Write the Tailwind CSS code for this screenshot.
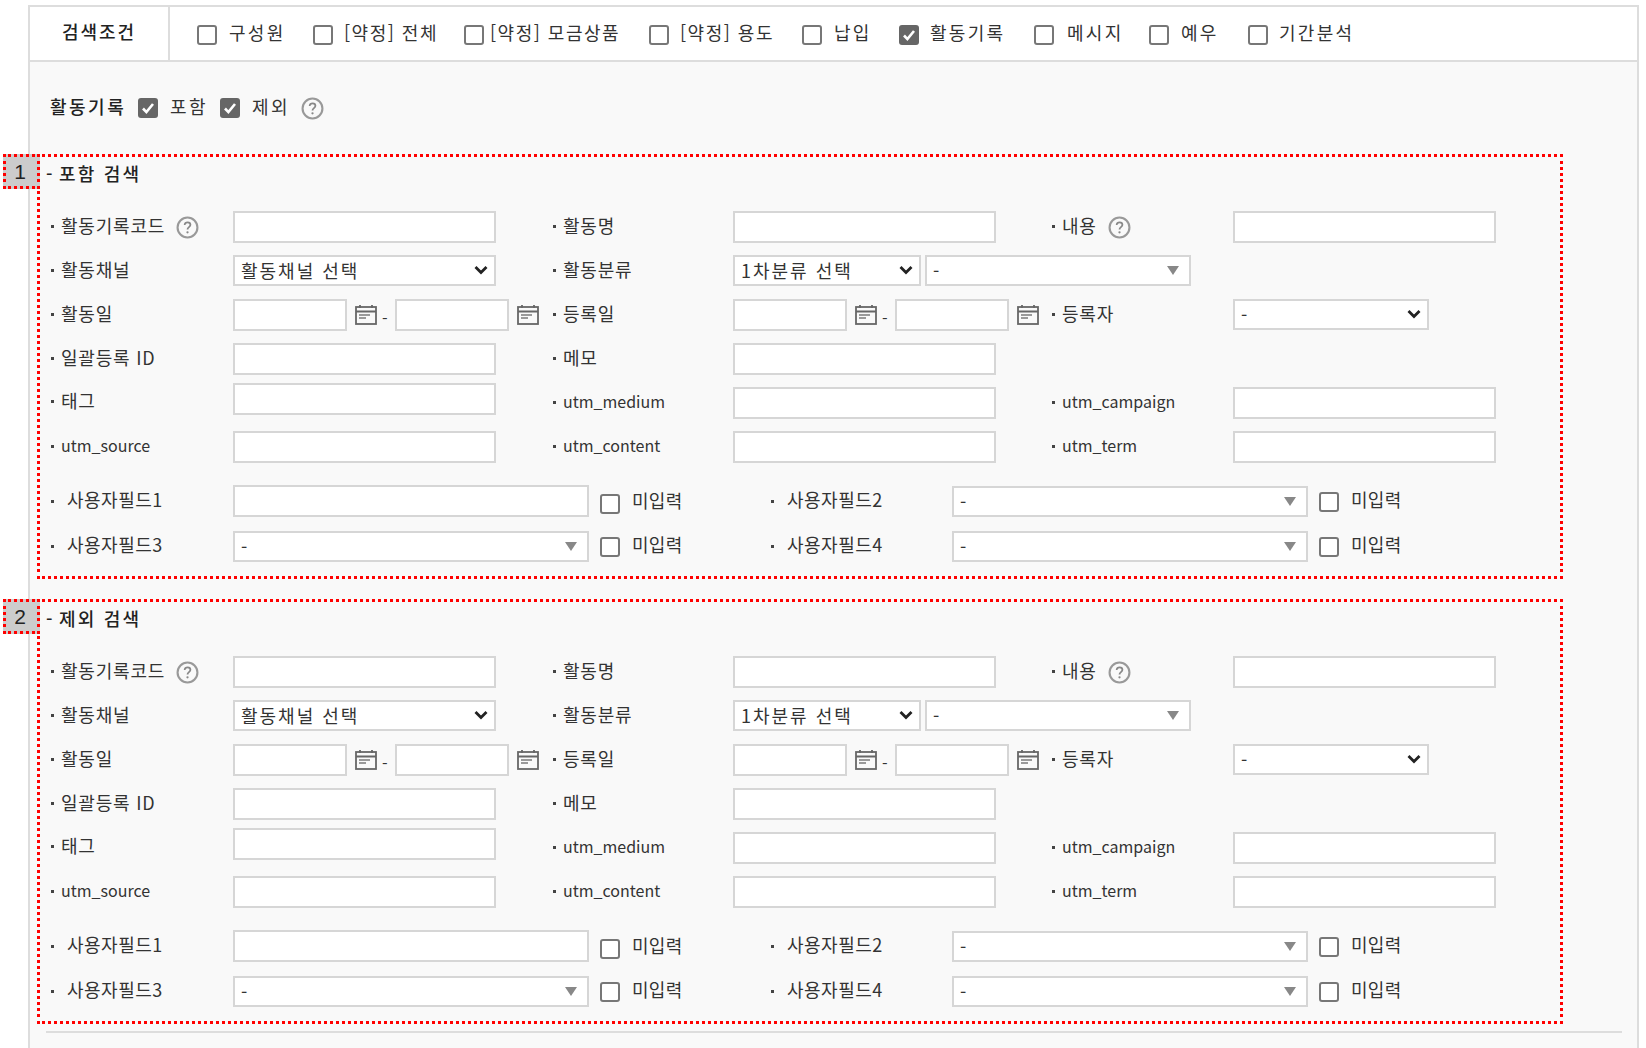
<!DOCTYPE html>
<html lang="ko">
<head>
  <meta charset="UTF-8" />
  <title>검색조건</title>
  <script src="https://cdn.jsdelivr.net/npm/@tailwindcss/browser@4"></script>
</head>
<body class="bg-white font-['Noto_Sans_CJK_KR','Noto_Sans',sans-serif] text-[18px] text-[#333] overflow-hidden">

  <div class="ml-[28px] mt-[5px] w-[1611px] h-[1043px] border-2 border-b-0 border-[#ddd] bg-[#f9f9f9]">
    <!-- 검색조건 -->
    <div class="flex h-[55px] bg-white border-b-2 border-[#ddd]">
      <div class="w-[140px] flex items-center justify-center pb-[4px] border-r-2 border-[#ddd] font-medium tracking-[2px] text-[#222]">검색조건</div>
      <div id="conditions" class="flex items-center pl-[27px]"></div>
    </div>

    <div class="flex items-center h-[24px] mt-[34px] ml-[20px] tracking-[2.5px]">
      <span class="font-medium text-[#222] w-[88px] tracking-[2.5px] pb-[3px]">활동기록</span>
      <span id="incl" class="flex items-center"></span>
    </div>

    <div id="sections"></div>

    <hr class="ml-[16px] mt-[7px] w-[1576px] border-t-2 border-[#ddd]" />
  </div>

<script>
  const cls = {
    input: "block h-[32px] bg-white border-2 border-[#d6d6d6]",
    select: "h-[31px] w-full appearance-none bg-white border-2 border-[#d6d6d6] pl-[6px] text-[18px] tracking-[2px] text-[#333]",
    label: "flex items-center h-[32px] pb-[4px] tracking-[0.8px] whitespace-nowrap",
    latin: "flex items-center h-[32px] pb-[4px] text-[16px] whitespace-nowrap",
    dot: "w-[3px] h-[3px] mr-[7px] mt-[3px] bg-[#444] shrink-0"
  };

  const check = (on) => on
    ? `<span class="flex items-center justify-center w-[20px] h-[20px] rounded-[3px] bg-[#666] shrink-0"><svg width="14" height="14" viewBox="0 0 14 14" fill="none" stroke="#fff" stroke-width="2.6"><path d="M2 7.5l3.4 3.6L12 3" /></svg></span>`
    : `<span class="block w-[20px] h-[20px] rounded-[3px] border-2 border-[#777] bg-white shrink-0"></span>`;

  const help = `<svg class="ml-[11px] mt-[4px] shrink-0" width="23" height="23" viewBox="0 0 22 22" fill="none"><circle cx="11" cy="11" r="9.5" stroke="#999" stroke-width="2" /><path d="M8.3 8.6c0-1.6 1.2-2.6 2.8-2.6s2.7 1 2.7 2.4c0 2.2-2.8 2.2-2.8 4.4" stroke="#888" stroke-width="1.7" /><circle cx="11" cy="15.6" r="1.1" fill="#888" /></svg>`;

  const calendar = `<svg class="shrink-0" width="22" height="22" viewBox="0 0 22 22" fill="none" stroke="#666" stroke-width="1.8"><rect x="1" y="3" width="20" height="17" /><path d="M1 7.5h20M5 1v3M17 1v3" /><path d="M4 11h11M4 14h7" stroke="#999" /></svg>`;

  const chevron = `<svg class="absolute right-[8px] top-[9px] pointer-events-none" width="14" height="12" viewBox="0 0 14 12" fill="none" stroke="#222" stroke-width="2.8"><path d="M1.5 3l5.5 5.5L12.5 3" /></svg>`;
  const arrow = `<svg class="absolute right-[12px] top-[11px] pointer-events-none" width="12" height="9" viewBox="0 0 12 9"><path d="M0 0h12L6 9z" fill="#888" /></svg>`;

  function label(text, extra) {
    return `<div class="${cls.label} pl-[1px]"><i class="${cls.dot}"></i>${text}${extra || ""}</div>`;
  }
  function latin(text) {
    return `<div class="${cls.latin} pl-[1px]"><i class="${cls.dot}"></i>${text}</div>`;
  }
  function label2(text) {
    return `<div class="flex items-center h-[32px] pb-[3px] tracking-[0.5px] whitespace-nowrap pl-[1px]"><i class="w-[3px] h-[3px] mt-[3px] mr-[13px] bg-[#444] shrink-0"></i>${text}</div>`;
  }
  function select(text, width, icon) {
    return `<div class="relative ${width} shrink-0"><select class="${cls.select}"><option>${text}</option></select>${icon}</div>`;
  }
  function missing(boxOffset, textOffset) {
    return `<div class="flex items-center shrink-0"><span class="${boxOffset}">${check(false)}</span><span class="ml-[12px] ${textOffset} tracking-[0.3px]">미입력</span></div>`;
  }
  function dates() {
    return `<div class="flex items-center">
      <input class="${cls.input} w-[114px]" />
      <span class="ml-[8px]">${calendar}</span>
      <span class="ml-[5px] mr-[10px] mt-[6px] w-[3px] text-[16px]">-</span>
      <input class="${cls.input} w-[114px]" />
      <span class="ml-[8px]">${calendar}</span>
    </div>`;
  }
  const input = `<input class="${cls.input} w-[263px]" />`;

  function section(num, title) {
    return `<div class="relative ml-[7px] mt-[20px] first:mt-[34px] w-[1526px] h-[425px] border-[3px] border-dotted border-[#f00]">
      <div class="absolute -left-[37px] -top-[3px] w-[37px] h-[35px] flex items-center justify-center pr-[3px] bg-[#ccc] border-[3px] border-dotted border-[#f00] font-['Liberation_Sans',sans-serif] text-[21px] text-[#222]">${num}</div>
      <div class="flex items-center h-[32px] pl-[6px] font-medium tracking-[2.2px] text-[#222]"><span class="w-[13px]">-</span>${title}</div>

      <div class="mt-[22px] ml-[10px] grid grid-cols-[183px_319px_181px_318px_182px_263px] grid-rows-[repeat(6,32px)] gap-y-[12px]">
        ${label("활동기록코드", help)}${input}${label("활동명")}${input}${label("내용", help)}${input}

        ${label("활동채널")}${select("활동채널 선택", "w-[263px]", chevron)}${label("활동분류")}
        <div class="flex col-span-3 gap-[4px]">${select("1차분류 선택", "w-[188px]", chevron)}${select("-", "w-[266px]", arrow)}</div>

        ${label("활동일")}${dates()}${label("등록일")}${dates()}${label("등록자")}${select("-", "w-[196px]", chevron)}

        ${label("일괄등록 ID")}${input}${label("메모")}${input}<div></div><div></div>

        <div class="-mt-[1px]">${label("태그")}</div><div class="-mt-[4px]">${input}</div>${latin("utm_medium")}${input}${latin("utm_campaign")}${input}

        ${latin("utm_source")}${input}${latin("utm_content")}${input}${latin("utm_term")}${input}
      </div>

      <div class="mt-[22px] ml-[10px] grid grid-cols-[183px_537px_182px_400px] grid-rows-[repeat(2,32px)] gap-y-[13px]">
        ${label2("사용자필드1")}<div class="flex items-center"><input class="${cls.input} w-[356px] mr-[11px]" />${missing("mt-[6px]", "mt-[2px] pb-[3px]")}</div>
        ${label2("사용자필드2")}<div class="flex items-center">${select("-", "w-[356px] mr-[11px]", arrow)}${missing("mt-[2px]", "pb-[3px]")}</div>
        ${label2("사용자필드3")}<div class="flex items-center">${select("-", "w-[356px] mr-[11px]", arrow)}${missing("mt-[2px]", "pb-[3px]")}</div>
        ${label2("사용자필드4")}<div class="flex items-center">${select("-", "w-[356px] mr-[11px]", arrow)}${missing("mt-[2px]", "pb-[3px]")}</div>
      </div>
    </div>`;
  }

  document.getElementById("sections").innerHTML = section(1, "포함 검색") + section(2, "제외 검색");

  const conditions = [
    ["구성원", "w-[116px]", false, "ml-[12px] tracking-[2.3px]"],
    ["[약정] 전체", "w-[151px]", false, "ml-[11px] tracking-[1.5px]"],
    ["[약정] 모금상품", "w-[185px]", false, "ml-[6px] tracking-[1.5px]"],
    ["[약정] 용도", "w-[153px]", false, "ml-[11px] tracking-[1.5px]"],
    ["납입", "w-[97px]", false, "ml-[12px] tracking-[2.3px]"],
    ["활동기록", "w-[135px]", true, "ml-[11px] tracking-[2.3px]"],
    ["메시지", "w-[115px]", false, "ml-[13px] tracking-[2.3px]"],
    ["예우", "w-[99px]", false, "ml-[12px] tracking-[2.3px]"],
    ["기간분석", "w-[120px]", false, "ml-[11px] tracking-[2.3px]"]
  ];
  document.getElementById("conditions").innerHTML = conditions.map(c =>
    `<label class="flex items-center shrink-0 ${c[1]}"><span class="mt-[2px]">${check(c[2])}</span><span class="${c[3]} pb-[3px] whitespace-nowrap">${c[0]}</span></label>`
  ).join("");

  document.getElementById("incl").innerHTML =
    `${check(true)}<span class="ml-[12px] w-[50px] pb-[3px]">포함</span>${check(true)}<span class="ml-[12px] pb-[3px]">제외</span><span class="-mt-[4px]">${help}</span>`;
</script>
</body>
</html>
